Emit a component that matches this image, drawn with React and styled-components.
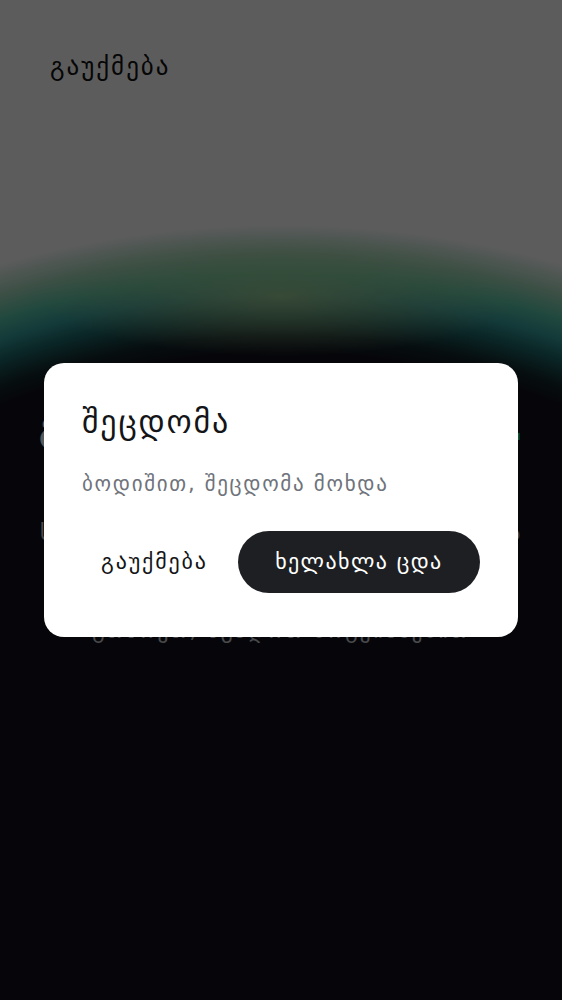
import React from 'react';
import styled, { createGlobalStyle } from 'styled-components';

// Global
const GlobalStyle = createGlobalStyle`
    html, body {
        margin:0;
        padding:0;
    }
    body {
        background:#11131c;
        font-family:"DejaVu Sans", "Noto Sans", sans-serif;
    }
`

// Page behind the dialog
const Page = styled.div`
    min-height:100vh;
    display:flex;
    flex-direction:column;
    background-color:#ffffff;
    background-image:
        radial-gradient(ellipse 240px 60px at 50% 296px, rgba(196,222,150,0.7) 0%, rgba(196,222,150,0) 100%),
        radial-gradient(ellipse 597px 425px at 50% 760px,
            #11131c 0%,
            #11131c 96%,
            #142a2f 100%,
            #1d6668 105%,
            #37a2a0 109.6%,
            #5ec9ab 114%,
            #a6dcc0 119%,
            #ffffff 126%);
`

const TopBar = styled.header`
    display:flex;
    align-items:center;
    padding:52px 50px 40px;
`

const BackLink = styled.button`
    border:none;
    padding:0;
    background:none;
    color:#111;
    font-size:25px;
    letter-spacing:2px;
    font-family:inherit;
    cursor:pointer;
`

const Content = styled.main`
    display:flex;
    flex-direction:column;
    align-items:center;
    padding:285px 20px 0;
    text-align:center;
`

const Headline = styled.h1`
    margin:0;
    color:#f4f5f7;
    font-size:37px;
    font-weight:700;
    white-space:nowrap;
`

const Dot = styled.span`
    color:#1de9a6;
`

const Lead = styled.p`
    margin:71px 0 0;
    color:#c9ccd2;
    font-size:22px;
    letter-spacing:1.7px;
    white-space:nowrap;
`

const Note = styled.p`
    margin:74px 0 0;
    color:#c9ccd2;
    font-size:21px;
    letter-spacing:2.2px;
    white-space:nowrap;
`

// Dialog
const Backdrop = styled.div`
    position:fixed;
    inset:0;
    display:flex;
    align-items:center;
    justify-content:center;
    background:rgba(0,0,0,0.64);
`

const Dialog = styled.div`
    width:474px;
    box-sizing:border-box;
    padding:40px 38px 44px;
    border-radius:20px;
    background:#ffffff;
`

const DialogTitle = styled.h2`
    margin:0;
    color:#141518;
    font-size:32px;
    font-weight:400;
    letter-spacing:1.8px;
    line-height:1.2;
`

const DialogText = styled.p`
    margin:30px 0 0;
    color:#6f737b;
    font-size:21px;
    letter-spacing:1.7px;
    line-height:1.2;
`

const Actions = styled.div`
    display:flex;
    gap:11px;
    margin-top:34px;
`

const ActionButton = styled.button`
    height:62px;
    border:none;
    border-radius:31px;
    font-family:inherit;
    font-size:22px;
    white-space:nowrap;
    cursor:pointer;
    padding:0 ${p => p.$primary ? '12px' : '19px'};
    flex:${p => p.$primary ? '1' : 'none'};
    letter-spacing:${p => p.$primary ? '1.4px' : '1.85px'};
    color:${p => p.$primary ? '#ffffff' : '#141518'};
    background:${p => p.$primary ? '#1e1f23' : 'transparent'};
`

export default function App() {
    return (
        <>
            <GlobalStyle/>
            <Page>
                <TopBar>
                    <BackLink>გაუქმება</BackLink>
                </TopBar>
                <Content>
                    <Headline>გადახდა ვერ შესრულდა<Dot>.</Dot></Headline>
                    <Lead>სამწუხაროდ, ოპერაცია ვერ დასრულდა</Lead>
                    <Note>გთხოვთ, სცადოთ მოგვიანებით</Note>
                </Content>
            </Page>
            <Backdrop>
                <Dialog role="dialog">
                    <DialogTitle>შეცდომა</DialogTitle>
                    <DialogText>ბოდიშით, შეცდომა მოხდა</DialogText>
                    <Actions>
                        <ActionButton>გაუქმება</ActionButton>
                        <ActionButton $primary>ხელახლა ცდა</ActionButton>
                    </Actions>
                </Dialog>
            </Backdrop>
        </>
    )
}
